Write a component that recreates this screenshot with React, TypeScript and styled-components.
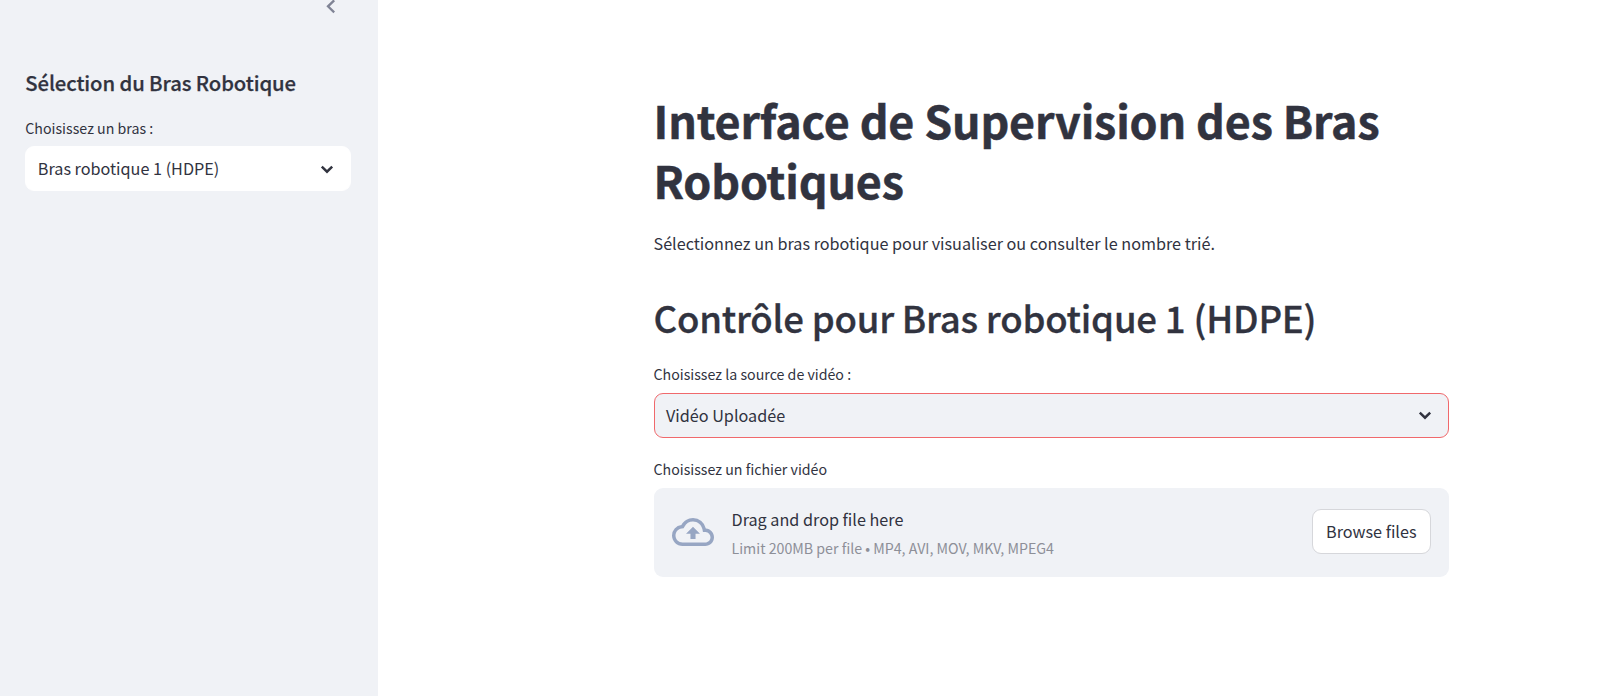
import React from "react";
import styled, { createGlobalStyle } from "styled-components";
import { MdOutlineBackup } from "react-icons/md";

const GlobalStyle = createGlobalStyle`
  * { box-sizing: border-box; }
  body {
    margin: 0;
    overflow: hidden;
    background: #ffffff;
    color: #31333f;
    font-family: "Noto Sans CJK JP", "Noto Sans", sans-serif;
    font-size: 16.2px;
    line-height: 28.9px;
  }
`;

const Layout = styled.div`
  display: flex;
  height: 696px;
`;

const Sidebar = styled.aside`
  width: 378px;
  flex: none;
  padding: 0 27px 0 25.3px;
  background: #f0f2f6;
`;

const CollapseRow = styled.div`
  display: flex;
  justify-content: flex-end;
  height: 69px;
  padding-right: 15px;
  color: #808495;
`;

const SidebarTitle = styled.h2`
  margin: 0 0 19.7px;
  font-size: 20.3px;
  font-weight: 500;
  line-height: 27px;
  letter-spacing: -0.1px;
  -webkit-text-stroke: 0.25px currentColor;
`;

const Main = styled.main`
  flex: 1;
  padding: 90px 0 0 275.5px;
`;

const Content = styled.div`
  width: 795.5px;
`;

const PageTitle = styled.h1`
  margin: 0;
  font-size: 44.8px;
  font-weight: 700;
  line-height: 59.5px;
  letter-spacing: -0.15px;
  -webkit-text-stroke: 0.5px currentColor;
`;

const Intro = styled.p`
  margin: 20px 0 35px;
`;

const SectionTitle = styled.h2`
  margin: 0 0 20px;
  font-size: 36.6px;
  font-weight: 500;
  line-height: 49px;
  letter-spacing: -0.24px;
  -webkit-text-stroke: 0.3px currentColor;
`;

const Label = styled.label`
  display: block;
  height: 30px;
  font-size: 14.2px;
  line-height: 25px;
`;

const Select = styled.div<{ $active?: boolean }>`
  display: flex;
  align-items: center;
  justify-content: space-between;
  height: 45px;
  margin-top: 0.6px;
  padding: 0 16px 0 11.5px;
  border: 1px solid ${(p) => (p.$active ? "#f0696c" : "#ffffff")};
  border-radius: 9px;
  background: ${(p) => (p.$active ? "#f0f2f6" : "#ffffff")};
`;

const Uploader = styled.section`
  margin-top: 19.4px;
`;

const DropZone = styled.div`
  display: flex;
  align-items: center;
  height: 89px;
  margin-top: 0.8px;
  padding: 0 18px;
  border-radius: 9px;
  background: #f0f2f6;
`;

const CloudIcon = styled(MdOutlineBackup)`
  flex: none;
  width: 42px;
  height: 42px;
  margin-right: 18px;
  color: #97a6c3;
`;

const Instructions = styled.div`
  flex: 1;
  padding-top: 1px;
`;

const Hint = styled.div`
  margin-top: 2px;
  font-size: 14.2px;
  line-height: 25px;
  color: #8d8f98;
`;

const BrowseButton = styled.button`
  width: 119.5px;
  height: 45px;
  margin-bottom: 2px;
  padding: 0;
  border: 1px solid #d6d7db;
  border-radius: 9px;
  background: #ffffff;
  color: inherit;
  font: inherit;
`;

const ChevronDown = () => (
  <svg width="14" height="10" viewBox="0 0 14 10" fill="none">
    <path d="M1.8 2.7L7 7.7L12.2 2.7" stroke="#31333f" strokeWidth="2.5" />
  </svg>
);

const ChevronLeft = () => (
  <svg width="10" height="14" viewBox="0 0 10 14" fill="none">
    <path d="M8.2 0.3L2 6.3L8.2 12.3" stroke="currentColor" strokeWidth="2.3" />
  </svg>
);

export default function App() {
  return (
    <>
      <GlobalStyle />
      <Layout>
        <Sidebar>
          <CollapseRow>
            <ChevronLeft />
          </CollapseRow>
          <SidebarTitle>Sélection du Bras Robotique</SidebarTitle>
          <Label>Choisissez un bras :</Label>
          <Select>
            <span>Bras robotique 1 (HDPE)</span>
            <ChevronDown />
          </Select>
        </Sidebar>
        <Main>
          <Content>
            <PageTitle>Interface de Supervision des Bras Robotiques</PageTitle>
            <Intro>Sélectionnez un bras robotique pour visualiser ou consulter le nombre trié.</Intro>
            <SectionTitle>Contrôle pour Bras robotique 1 (HDPE)</SectionTitle>
            <Label>Choisissez la source de vidéo :</Label>
            <Select $active>
              <span>Vidéo Uploadée</span>
              <ChevronDown />
            </Select>
            <Uploader>
              <Label>Choisissez un fichier vidéo</Label>
              <DropZone>
                <CloudIcon />
                <Instructions>
                  <div>Drag and drop file here</div>
                  <Hint>Limit 200MB per file • MP4, AVI, MOV, MKV, MPEG4</Hint>
                </Instructions>
                <BrowseButton>Browse files</BrowseButton>
              </DropZone>
            </Uploader>
          </Content>
        </Main>
      </Layout>
    </>
  );
}
